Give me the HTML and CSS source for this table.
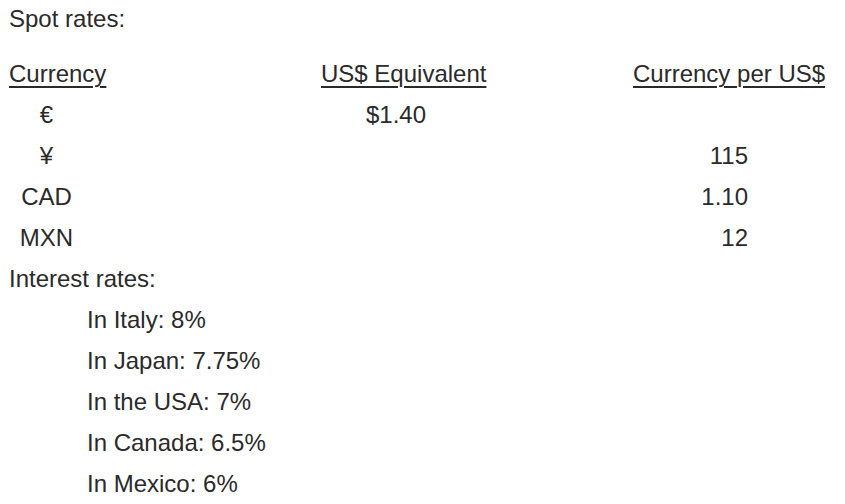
FILE: index.html
```html
<!DOCTYPE html>
<html>
<head>
<meta charset="utf-8">
<link rel="stylesheet" href="styles.css">
</head>
<body>
<div class="page">
  <div class="title">Spot rates:</div>
  <div class="rates">
    <div class="row head">
      <div class="c1"><span class="u">Currency</span></div>
      <div class="c2"><span class="u">US$ Equivalent</span></div>
      <div class="c3 left"><span class="u">Currency per US$</span></div>
    </div>
    <div class="row">
      <div class="c1"><span class="sym">€</span></div>
      <div class="c2"><span class="val">$1.40</span></div>
      <div class="c3"></div>
    </div>
    <div class="row">
      <div class="c1"><span class="sym">¥</span></div>
      <div class="c2"></div>
      <div class="c3"><span class="num">115</span></div>
    </div>
    <div class="row">
      <div class="c1"><span class="sym">CAD</span></div>
      <div class="c2"></div>
      <div class="c3"><span class="num">1.10</span></div>
    </div>
    <div class="row">
      <div class="c1"><span class="sym">MXN</span></div>
      <div class="c2"></div>
      <div class="c3"><span class="num">12</span></div>
    </div>
  </div>
  <div class="subtitle">Interest rates:</div>
  <ul class="interest">
    <li>In Italy: 8%</li>
    <li>In Japan: 7.75%</li>
    <li>In the USA: 7%</li>
    <li>In Canada: 6.5%</li>
    <li>In Mexico: 6%</li>
  </ul>
</div>
</body>
</html>
```

FILE: styles.css
```css
html, body {
  margin: 0;
  padding: 0;
  background: #ffffff;
}
body {
  font-family: "Liberation Sans", Arial, sans-serif;
  font-size: 24px;
  color: #2a2a2a;
}
.page {
  padding-left: 9px;
  width: 836px;
  white-space: nowrap;
}
.title {
  line-height: 37px;
}
.rates {
  margin-top: 16px;
}
.row {
  display: grid;
  grid-template-columns: 312px 312px 212px;
  line-height: 41px;
  height: 41px;
}
.u {
  text-decoration: underline;
  text-decoration-thickness: 2px;
  text-underline-offset: 4px;
}
.sym {
  display: inline-block;
  width: 75px;
  text-align: center;
}
.val {
  padding-left: 45px;
}
.c3 {
  text-align: right;
}
.c3.left {
  text-align: left;
}
.num {
  padding-right: 97px;
}
.subtitle {
  line-height: 41px;
}
.interest {
  list-style: none;
  margin: 0;
  padding: 0 0 0 78px;
}
.interest li {
  line-height: 41px;
}
```
